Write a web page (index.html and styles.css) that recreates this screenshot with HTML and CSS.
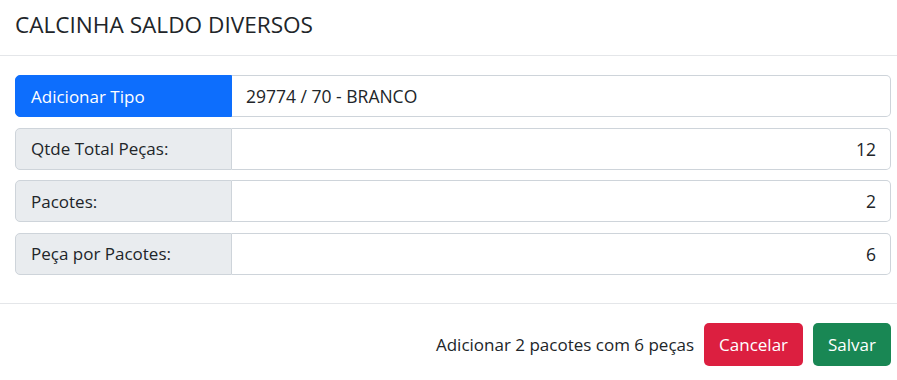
FILE: index.html
```html
<!DOCTYPE html>
<html lang="pt-BR">
<head>
<meta charset="utf-8">
<title>Calcinha Saldo Diversos</title>
<link rel="stylesheet" href="styles.css">
</head>
<body>
<div class="modal">
  <div class="modal-header">
    <h5 class="modal-title">CALCINHA SALDO DIVERSOS</h5>
  </div>
  <div class="modal-body">
    <div class="input-group">
      <span class="label label-primary">Adicionar Tipo</span>
      <div class="field">29774 / 70 - BRANCO</div>
    </div>
    <div class="input-group">
      <span class="label">Qtde Total Peças:</span>
      <div class="field field-right">12</div>
    </div>
    <div class="input-group">
      <span class="label">Pacotes:</span>
      <div class="field field-right">2</div>
    </div>
    <div class="input-group">
      <span class="label">Peça por Pacotes:</span>
      <div class="field field-right">6</div>
    </div>
  </div>
  <div class="modal-footer">
    <span class="summary">Adicionar 2 pacotes com 6 peças</span>
    <button class="btn btn-danger">Cancelar</button>
    <button class="btn btn-success">Salvar</button>
  </div>
</div>
</body>
</html>
```
FILE: styles.css
```css
* { box-sizing: border-box; }
html, body {
  margin: 0;
  padding: 0;
  background: #ffffff;
}
body {
  font-family: "Open Sans", "Noto Sans", sans-serif;
  color: #212529;
  font-size: 17px;
}
.modal {
  width: 897px;
  height: 380px;
  background: #fff;
  overflow: hidden;
}
.modal-header {
  height: 56px;
  padding: 0 15px;
  border-bottom: 1px solid #e4e6e9;
  display: flex;
  align-items: center;
}
.modal-title {
  margin: 0;
  font-size: 22.6px;
  font-weight: 400;
  line-height: 1;
  padding-bottom: 5px;
  color: #212529;
}
.modal-body {
  padding: 19px 6px 28px 15px;
  display: flex;
  flex-direction: column;
  gap: 10.5px;
  border-bottom: 1px solid #e4e6e9;
}
.input-group {
  display: flex;
  height: 42px;
}
.label {
  width: 217px;
  flex: none;
  display: flex;
  align-items: center;
  padding: 0 15px;
  background: #e9ecef;
  border: 1px solid #ced4da;
  border-radius: 5px 0 0 5px;
  color: #212529;
}
.label-primary {
  background: #0d6efd;
  border-color: #0d6efd;
  color: #ffffff;
}
.field {
  flex: 1;
  display: flex;
  align-items: center;
  padding: 0 14px;
  border: 1px solid #ced4da;
  border-left: none;
  border-radius: 0 5px 5px 0;
  background: #fff;
  color: #212529;
  font-size: 17.5px;
}
.field-right {
  justify-content: flex-end;
}
.modal-footer {
  display: flex;
  justify-content: flex-end;
  align-items: center;
  gap: 10px;
  padding: 19px 6px 0 15px;
}
.summary {
  font-size: 17px;
  color: #212529;
}
.btn {
  height: 43px;
  padding: 0 15px;
  border: none;
  border-radius: 5px;
  font-family: inherit;
  font-size: 17px;
  color: #ffffff;
  cursor: pointer;
}
.btn-danger { background: #dc1f40; }
.btn-success { background: #198754; }
```
